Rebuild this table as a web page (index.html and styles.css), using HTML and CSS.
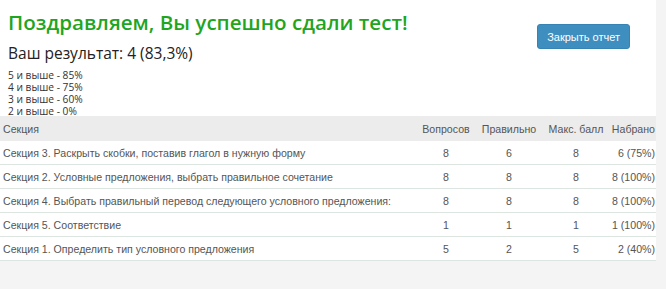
FILE: index.html
```html
<!DOCTYPE html>
<html lang="ru">
<head>
<meta charset="utf-8">
<link rel="stylesheet" href="styles.css">
</head>
<body>
<div class="page">
  <div class="top">
    <div class="summary">
      <h1 class="title">Поздравляем, Вы успешно сдали тест!</h1>
      <div class="result">Ваш результат: 4 (83,3%)</div>
      <div class="scale">
        <div>5 и выше - 85%</div>
        <div>4 и выше - 75%</div>
        <div>3 и выше - 60%</div>
        <div>2 и выше - 0%</div>
      </div>
    </div>
    <button class="close-btn">Закрыть отчет</button>
  </div>
  <table class="report">
    <colgroup>
      <col class="w-name">
      <col class="w-q">
      <col class="w-ok">
      <col class="w-max">
      <col class="w-score">
    </colgroup>
    <thead>
      <tr>
        <th class="c-name">Секция</th>
        <th class="c-num">Вопросов</th>
        <th class="c-num">Правильно</th>
        <th class="c-num">Макс. балл</th>
        <th class="c-score">Набрано</th>
      </tr>
    </thead>
    <tbody>
      <tr><td class="c-name">Секция 3. Раскрыть скобки, поставив глагол в нужную форму</td><td class="c-num">8</td><td class="c-num">6</td><td class="c-num">8</td><td class="c-score">6 (75%)</td></tr>
      <tr><td class="c-name">Секция 2. Условные предложения, выбрать правильное сочетание</td><td class="c-num">8</td><td class="c-num">8</td><td class="c-num">8</td><td class="c-score">8 (100%)</td></tr>
      <tr><td class="c-name">Секция 4. Выбрать правильный перевод следующего условного предложения:</td><td class="c-num">8</td><td class="c-num">8</td><td class="c-num">8</td><td class="c-score">8 (100%)</td></tr>
      <tr><td class="c-name">Секция 5. Соответствие</td><td class="c-num">1</td><td class="c-num">1</td><td class="c-num">1</td><td class="c-score">1 (100%)</td></tr>
      <tr><td class="c-name">Секция 1. Определить тип условного предложения</td><td class="c-num">5</td><td class="c-num">2</td><td class="c-num">5</td><td class="c-score">2 (40%)</td></tr>
    </tbody>
  </table>
</div>
</body>
</html>
```
FILE: styles.css
```css
html, body {
  margin: 0;
  padding: 0;
  background: #f4f4f4;
}
.page {
  width: 656px;
}
.top {
  background: #ffffff;
  height: 116px;
  display: flex;
  justify-content: space-between;
  align-items: flex-start;
  padding: 0 26px 0 8px;
  box-sizing: border-box;
}
.summary {
  display: flex;
  flex-direction: column;
}
.title {
  margin: 8px 0 0 0;
  font-family: "Open Sans", sans-serif;
  font-weight: 600;
  font-size: 20.6px;
  line-height: 28px;
  color: #1fa51f;
}
.result {
  margin-top: 7px;
  font-family: "Open Sans", sans-serif;
  font-size: 15.5px;
  line-height: 20px;
  color: #222222;
}
.scale {
  margin-top: 6px;
  font-family: "Open Sans", sans-serif;
  font-size: 10.2px;
  line-height: 12px;
  color: #333333;
}
.close-btn {
  margin-top: 24px;
  height: 25px;
  padding: 0 9px;
  background: #3e8ec0;
  border: 1px solid #3783b3;
  border-radius: 3px;
  color: #ffffff;
  font-family: "Liberation Sans", Arial, sans-serif;
  font-size: 11px;
}
.report {
  width: 656px;
  table-layout: fixed;
  border-collapse: collapse;
  font-family: "Liberation Sans", Arial, sans-serif;
  font-size: 10.6px;
  color: #555555;
}
.w-name { width: 416px; }
.w-q { width: 60px; }
.w-ok { width: 66px; }
.w-max { width: 68px; }
.w-score { width: 46px; }
.report th {
  font-weight: normal;
  background: #ececec;
  height: 25px;
  padding: 0;
  color: #555555;
  white-space: nowrap;
}
.report td {
  background: #ffffff;
  height: 23px;
  padding: 0;
  border-bottom: 1px solid #dde5e1;
  white-space: nowrap;
}
.report .c-name {
  text-align: left;
  padding-left: 3px;
}
.c-num {
  text-align: center;
}
.report .c-score {
  text-align: right;
  padding-right: 1px;
  overflow: visible;
}
```
